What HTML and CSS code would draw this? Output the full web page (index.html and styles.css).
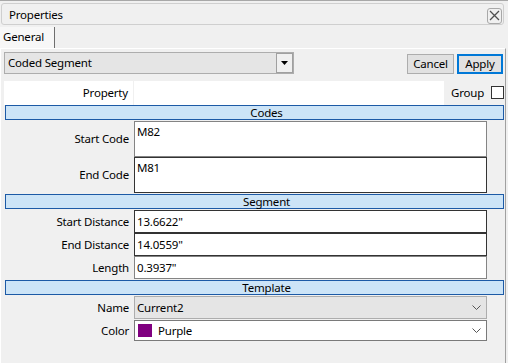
FILE: index.html
```html
<!DOCTYPE html>
<html>
<head>
<meta charset="utf-8">
<link rel="stylesheet" href="styles.css">
</head>
<body>
<div class="topline"></div>
<div class="titlebar">
  <span class="title">Properties</span>
  <span class="close"><svg width="11" height="11" viewBox="0 0 11 11"><path d="M1 1 L10 10 M10 1 L1 10" stroke="#505050" stroke-width="1.3" fill="none"/></svg></span>
</div>
<div class="tabstrip">
  <div class="tab">General</div>
</div>
<div class="panel">
  <div class="toolbar">
    <div class="combo">
      <span class="combo-text">Coded Segment</span>
      <span class="combo-btn"><svg width="7" height="4" viewBox="0 0 7 4"><path d="M0 0 H7 L3.5 4 Z" fill="#000"/></svg></span>
    </div>
    <div class="btn cancel">Cancel</div>
    <div class="btn apply">Apply</div>
  </div>
  <div class="prop-row">
    <div class="prop-white">
      <div class="prop-label">Property</div>
      <div class="prop-val"></div>
    </div>
    <div class="prop-group">
      <span>Group</span>
      <span class="check"></span>
    </div>
  </div>
  <div class="band">Codes</div>
  <div class="fields">
    <div class="label tall">Start Code</div>
    <div class="input tall multi">M82</div>
    <div class="label tall">End Code</div>
    <div class="input tall multi dark">M81</div>
  </div>
  <div class="band">Segment</div>
  <div class="fields">
    <div class="label">Start Distance</div>
    <div class="input dark">13.6622"</div>
    <div class="label">End Distance</div>
    <div class="input dark">14.0559"</div>
    <div class="label">Length</div>
    <div class="input">0.3937"</div>
  </div>
  <div class="band">Template</div>
  <div class="fields">
    <div class="label">Name</div>
    <div class="input select gray"><span>Current2</span><svg class="chev" width="9" height="5" viewBox="0 0 9 5"><path d="M0.5 0.5 L4.5 4.5 L8.5 0.5" stroke="#555" fill="none"/></svg></div>
  </div>
  <div class="fields gap">
    <div class="label short">Color</div>
    <div class="input select short"><span class="swatch"></span><span>Purple</span><svg class="chev" width="9" height="5" viewBox="0 0 9 5"><path d="M0.5 0.5 L4.5 4.5 L8.5 0.5" stroke="#555" fill="none"/></svg></div>
  </div>
</div>
</body>
</html>
```
FILE: styles.css
```css
* { box-sizing: border-box; }
body {
  margin: 0;
  width: 508px;
  height: 363px;
  overflow: hidden;
  background: #f0f0f0;
  font-family: "Segoe UI", "Noto Sans", sans-serif;
  font-size: 11.5px;
  letter-spacing: -0.2px;
  color: #000;
}
.topline { height: 1px; background: #a8a8a8; }
.titlebar {
  margin: 2px 4px 0 1px;
  height: 22px;
  border: 1px solid #cfcfcf;
  border-radius: 3px;
  display: flex;
  align-items: center;
  justify-content: space-between;
  padding: 0 1px 0 7px;
}
.close {
  width: 15px;
  height: 16px;
  border: 1px solid #a8a8a8;
  border-radius: 3px;
  display: flex;
  align-items: center;
  justify-content: center;
  margin-top: 3px;
}
.tabstrip { height: 23px; padding-top: 2px; }
.tab {
  width: 55px;
  height: 21px;
  padding-left: 3px;
  line-height: 19px;
  border-right: 1px solid #6e6e6e;
  background: #f7f7f7;
}
.panel {
  width: 506px;
  height: 315px;
  border-top: 1px solid #fff;
  border-left: 1px solid #fff;
  border-right: 1px solid #a0a0a0;
  padding: 3px 0 0 3px;
}
.toolbar { display: flex; height: 22px; align-items: flex-start; }
.combo {
  width: 290px;
  height: 22px;
  border: 1px solid #adadad;
  background: #e5e5e5;
  display: flex;
  align-items: center;
  padding-left: 3px;
}
.combo-text { flex: 1; padding-bottom: 1px; }
.combo-btn {
  width: 17px;
  height: 20px;
  border: 1px solid #a0a0a0;
  background: #f0f0f0;
  display: flex;
  align-items: center;
  justify-content: center;
}
.btn {
  height: 20px;
  margin-top: 2px;
  background: #e1e1e1;
  border: 1px solid #adadad;
  display: flex;
  align-items: center;
  justify-content: center;
  padding-bottom: 1px;
}
.cancel { width: 47px; margin-left: auto; }
.apply { width: 46px; margin-left: 3px; margin-right: 2px; border: 2px solid #0078d7; }
.prop-row { display: flex; height: 24px; margin-top: 7px; }
.prop-white { display: flex; width: 440px; background: #fff; }
.prop-label {
  width: 130px;
  border-right: 1px solid #f0f0f0;
  text-align: right;
  padding: 0 5px 2px 0;
  display: flex;
  align-items: center;
  justify-content: flex-end;
}
.prop-group {
  flex: 1;
  display: flex;
  align-items: center;
  justify-content: space-between;
  padding: 0 1px 1px 7px;
}
.check {
  width: 13px;
  height: 13px;
  border: 1px solid #333;
  background: #fff;
}
.band {
  margin-left: 1px;
  margin-right: 1px;
  height: 15px;
  border: 1px solid #1c5aa6;
  background: #cce4f7;
  text-align: center;
  padding-left: 24px;
  line-height: 13px;
}
.fields {
  display: grid;
  grid-template-columns: 130px 353px;
  margin: 1px 0;
}
.fields.gap { margin-top: 1px; }
.label {
  height: 23px;
  display: flex;
  align-items: center;
  justify-content: flex-end;
  padding: 0 5px 1px 0;
}
.input {
  height: 23px;
  background: #fff;
  border: 1px solid #848484;
  padding: 0 2px 1px;
  display: flex;
  align-items: center;
}
.input.dark { border-color: #333; }
.tall { height: 36px; }
.multi { align-items: flex-start; padding-top: 2px; line-height: 15px; }
.short { height: 21px; }
.select { border-color: #7a7a7a; }
.select.gray { background: #e5e5e5; border-color: #adadad; }
.select span { flex: none; }
.chev { margin-left: auto; margin-right: 3px; }
.swatch {
  width: 14px;
  height: 13px;
  background: #800080;
  margin: 0 6px 0 1px;
}
```
